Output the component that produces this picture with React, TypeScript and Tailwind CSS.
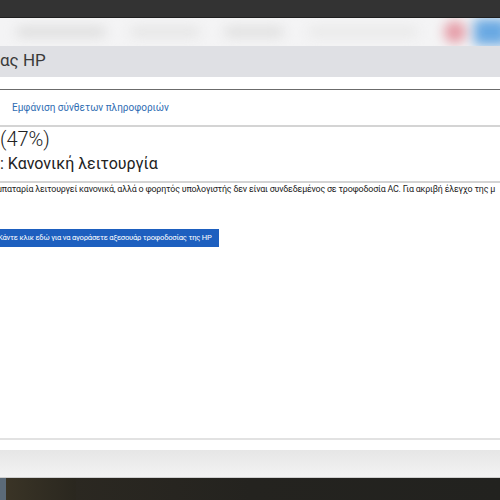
import React from "react";

const font = { fontFamily: 'Roboto, "Noto Sans", sans-serif' };

function BrowserStrip() {
  return (
    <div className="relative h-[28px] overflow-hidden bg-[#f4f4f5]">
      <div className="flex h-full items-center gap-6 px-4 blur-[6px]">
        <div className="h-[10px] w-[90px] rounded-full bg-[#dcdcdc]" />
        <div className="h-[10px] w-[70px] rounded-full bg-[#e4e4e4]" />
        <div className="h-[10px] w-[60px] rounded-full bg-[#dedede]" />
        <div className="h-[10px] w-[110px] rounded-full bg-[#e8e8e8]" />
        <div className="ml-auto h-[22px] w-[22px] rounded-full bg-[#e59aa5]" />
        <div className="-ml-4 -mr-6 h-[26px] w-[34px] bg-[#68a8e2]" />
      </div>
    </div>
  );
}

export default function App() {
  return (
    <div className="flex h-[500px] w-[500px] flex-col overflow-hidden bg-white text-[#2b2b2b]" style={font}>
      <div className="h-[18px] border-b border-[#1f1f1f] bg-[#333333]" />
      <BrowserStrip />

      <div className="flex h-[31px] items-center bg-[#dfe0e4] text-[17px] text-[#3a3a3a]">
        <span className="-mt-[1px]">ας HP</span>
      </div>

      <div className="h-[12px]" />
      <div className="h-px bg-[#6b6b6b]" />

      <div className="flex h-[37px] items-center border-b-2 border-[#d4d4d4] pl-[12px]">
        <a className="text-[10px] text-[#2f6db3]">Εμφάνιση σύνθετων πληροφοριών</a>
      </div>

      <div className="flex flex-col border-b-2 border-[#d4d4d4] pb-[5px]">
        <div className="mt-[-1px] text-[20px] font-light leading-[26px] text-[#222]">(47%)</div>
        <div className="text-[16px] leading-[24px] text-[#222]">: Κανονική λειτουργία</div>
      </div>

      <div className="-ml-[3px] overflow-hidden whitespace-nowrap text-[8.9px] leading-[13px] tracking-[-0.2px] text-[#222]">
        μπαταρία λειτουργεί κανονικά, αλλά ο φορητός υπολογιστής δεν είναι συνδεδεμένος σε τροφοδοσία AC. Για ακριβή έλεγχο της μ
      </div>
      <div className="-ml-[3px] text-[9px] leading-[13px] text-[#444]">.</div>

      <div className="mt-[20px]">
        <button className="flex h-[18px] w-[219px] items-center overflow-hidden bg-[#1d5fbf] whitespace-nowrap text-[7.6px] tracking-[-0.2px] text-white">
          <span className="-ml-[2px]">Κάντε κλικ εδώ για να αγοράσετε αξεσουάρ τροφοδοσίας της HP</span>
        </button>
      </div>

      <div className="flex-1" />
      <div className="h-[2px] bg-[#e2e2e2]" />
      <div className="h-[10px] bg-white" />
      <div className="h-[28px] border-b border-[#cfcfcf] bg-gradient-to-b from-[#e6e6e6] to-[#f3f3f3]" />
      <div className="flex h-[22px] bg-gradient-to-r from-[#2e2a22] via-[#24231f] to-[#22221f]">
        <div className="w-[6px] bg-[#5b6a78]" />
        <div className="w-[70px] bg-gradient-to-r from-[#3a3426] to-[#2a271f]" />
      </div>
    </div>
  );
}
